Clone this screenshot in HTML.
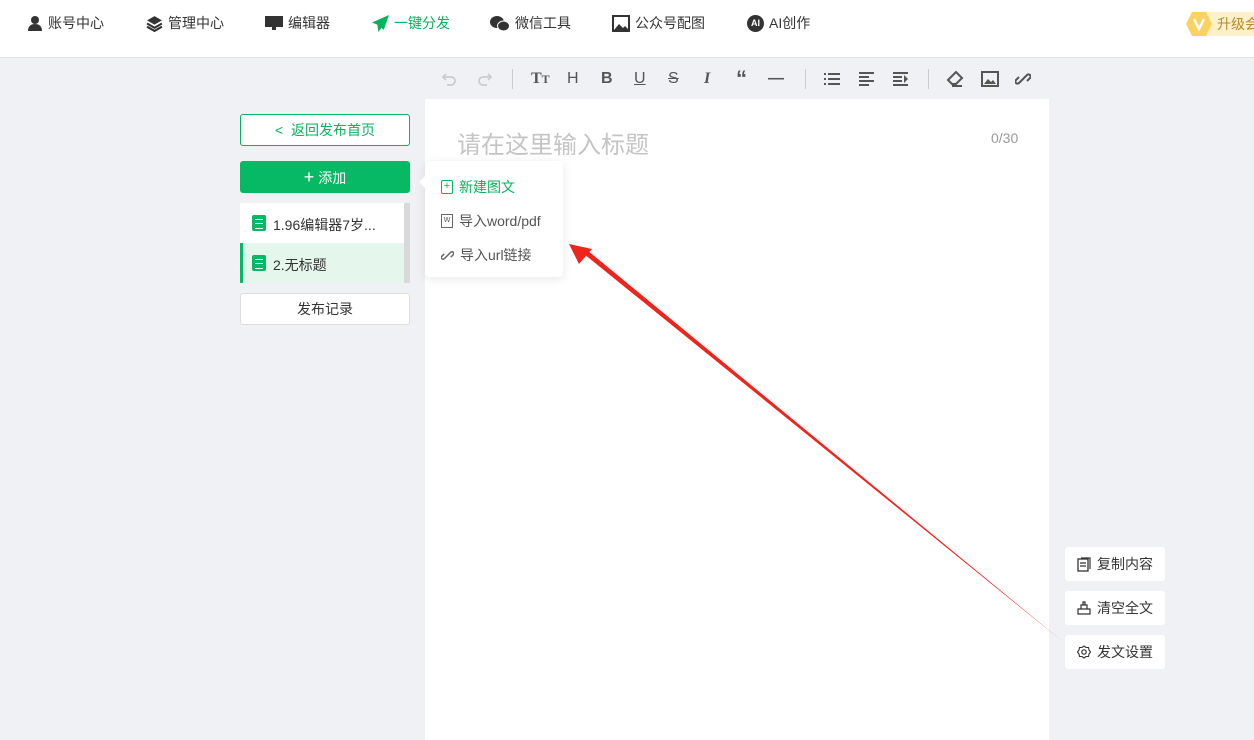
<!DOCTYPE html>
<html><head><meta charset="utf-8"><style>
*{margin:0;padding:0;box-sizing:border-box}
body{width:1254px;height:740px;overflow:hidden;background:#f0f1f5;font-family:"Liberation Sans","Noto Sans CJK SC",sans-serif;position:relative;color:#333}
.hdr{position:absolute;left:0;top:0;width:1254px;height:58px;background:#fff;border-bottom:1px solid #e2e3e6}
.nav{position:absolute;top:14px;font-size:14px;color:#333;display:flex;align-items:center;gap:5px;height:18px;white-space:nowrap}
.tb{position:absolute;top:70px;font-size:16px;color:#555;font-weight:bold}
.sep{position:absolute;top:69px;width:1px;height:20px;background:#ccc}
.btn{position:absolute;left:240px;width:170px;border-radius:3px;font-size:14px;text-align:center}
.ed{position:absolute;left:425px;top:99px;width:624px;height:641px;background:#fff}
.pop{position:absolute;left:425px;top:161px;width:138px;height:116px;background:#fff;border-radius:4px;box-shadow:0 2px 10px rgba(0,0,0,.1)}
.pi{position:absolute;left:16px;font-size:14px;color:#555;display:flex;align-items:center;gap:6px;white-space:nowrap}
.side{position:absolute;left:1065px;width:100px;height:34px;background:#fff;border-radius:3px;font-size:14px;color:#333;display:flex;align-items:center;padding-left:12px;gap:6px}
.doc{position:absolute;left:252px;width:14px;height:16px;background:#07b964;border-radius:2px}
.doc:before{content:"";position:absolute;left:3px;top:4px;width:8px;height:8px;border-top:1.5px solid #fff;border-bottom:1.5px solid #fff}
.doc:after{content:"";position:absolute;left:3px;top:7.5px;width:8px;height:1.5px;background:#fff}
</style></head><body>
<div class="hdr"></div>
<div class="nav" style="left:27px"><svg width="16" height="16" viewBox="0 0 16 16"><circle cx="8" cy="5" r="4" fill="#333"/><path d="M1 16c0-5 3-7 7-7s7 2 7 7z" fill="#333"/></svg>账号中心</div>
<div class="nav" style="left:146px"><svg width="17" height="17" viewBox="0 0 16 16"><path d="M8 1l7 4-7 4-7-4z" fill="#333"/><path d="M1 8l7 4 7-4M1 11l7 4 7-4" stroke="#333" stroke-width="2" fill="none"/></svg>管理中心</div>
<div class="nav" style="left:265px"><svg width="18" height="17" viewBox="0 0 18 17"><rect x="0" y="1" width="18" height="11" fill="#333"/><rect x="7" y="12" width="4" height="3" fill="#333"/></svg>编辑器</div>
<div class="nav" style="left:372px;color:#07b35b"><svg width="17" height="17" viewBox="0 0 16 16"><path d="M16 0L0 7l5 2 1 7 3-4 2 2z" fill="#07b35b"/></svg>一键分发</div>
<div class="nav" style="left:490px"><svg width="20" height="17" viewBox="0 0 20 17"><ellipse cx="7" cy="7" rx="7" ry="6" fill="#333"/><ellipse cx="13.5" cy="11" rx="6" ry="5" fill="#333" stroke="#fff" stroke-width="1"/></svg>微信工具</div>
<div class="nav" style="left:612px"><svg width="18" height="17" viewBox="0 0 18 17"><rect x="1" y="1" width="16" height="15" fill="none" stroke="#333" stroke-width="2"/><path d="M2 15l5-6 4 4 2-2 4 4z" fill="#333"/></svg>公众号配图</div>
<div class="nav" style="left:747px"><span style="width:17px;height:17px;border-radius:50%;background:#333;color:#fff;font-size:9px;font-weight:bold;display:flex;align-items:center;justify-content:center">AI</span>AI创作</div>
<div style="position:absolute;left:1197px;top:12px;width:70px;height:24px;background:#fdf1cc;border-radius:3px"></div>
<svg style="position:absolute;left:1186px;top:11px" width="26" height="26" viewBox="0 0 26 26"><path d="M6 1h14l6 12-6 12H6L0 13z" fill="#fbd261"/><path d="M8 8l5 10 5-10" stroke="#fff" stroke-width="2.5" fill="none"/></svg>
<div style="position:absolute;left:1217px;top:14px;font-size:14px;color:#b78a2c;white-space:nowrap">升级会员</div>

<svg style="position:absolute;left:442px;top:71px" width="16" height="16" viewBox="0 0 16 16"><path d="M4 3L1 6l3 3M1 6h8a4 4 0 010 8H5" stroke="#ccc" stroke-width="1.8" fill="none"/></svg>
<svg style="position:absolute;left:476px;top:71px" width="16" height="16" viewBox="0 0 16 16"><path d="M12 3l3 3-3 3M15 6H7a4 4 0 000 8h4" stroke="#ccc" stroke-width="1.8" fill="none"/></svg>
<div class="sep" style="left:512px"></div>
<div class="tb" style="left:531px;font-family:'Liberation Serif',serif">T<span style="font-size:12px">T</span></div>
<div class="tb" style="left:567px;font-weight:normal">H</div>
<div class="tb" style="left:601px">B</div>
<div class="tb" style="left:634px;text-decoration:underline;font-weight:normal">U</div>
<div class="tb" style="left:668px;text-decoration:line-through;font-weight:normal">S</div>
<div class="tb" style="left:704px;font-style:italic;font-family:'Liberation Serif',serif">I</div>
<div class="tb" style="left:736px;font-size:22px;top:66px">“</div>
<div class="tb" style="left:768px">—</div>
<div class="sep" style="left:805px"></div>
<svg style="position:absolute;left:824px;top:72px" width="16" height="14"><g fill="#555"><rect x="0" y="1" width="2" height="2"/><rect x="0" y="6" width="2" height="2"/><rect x="0" y="11" width="2" height="2"/><rect x="4" y="1" width="12" height="2"/><rect x="4" y="6" width="12" height="2"/><rect x="4" y="11" width="12" height="2"/></g></svg>
<svg style="position:absolute;left:859px;top:72px" width="16" height="14"><g fill="#555"><rect y="0" width="15" height="2"/><rect y="4" width="10" height="2"/><rect y="8" width="15" height="2"/><rect y="12" width="10" height="2"/></g></svg>
<svg style="position:absolute;left:893px;top:72px" width="16" height="14"><g fill="#555"><rect y="0" width="15" height="2"/><rect y="4" width="9" height="2"/><rect y="8" width="9" height="2"/><rect y="12" width="15" height="2"/><path d="M11 3l4 4-4 4z"/></g></svg>
<div class="sep" style="left:928px"></div>
<svg style="position:absolute;left:946px;top:70px" width="18" height="18" viewBox="0 0 18 18"><path d="M2 10l8-8 6 6-6 6H6z" fill="none" stroke="#555" stroke-width="2"/><path d="M6 16h10" stroke="#555" stroke-width="2"/></svg>
<svg style="position:absolute;left:981px;top:71px" width="18" height="16"><rect x="1" y="1" width="16" height="14" fill="none" stroke="#555" stroke-width="2"/><path d="M3 13l4-5 3 3 2-2 3 4z" fill="#555"/></svg>
<svg style="position:absolute;left:1015px;top:71px" width="16" height="16" viewBox="0 0 16 16"><path d="M7 9l-3 3a2 2 0 01-3-3l3-3M9 7l3-3a2 2 0 013 3l-3 3M6 10l4-4" stroke="#555" stroke-width="2" fill="none"/></svg>

<div class="btn" style="top:114px;height:32px;line-height:30px;border:1px solid #07b35b;color:#07b35b;background:#fff">&lt;&nbsp; 返回发布首页</div>
<div class="btn" style="top:161px;height:32px;line-height:32px;background:#07b964;color:#fff"><span style="font-size:18px">+</span> 添加</div>
<div style="position:absolute;left:240px;top:203px;width:164px;height:40px;background:#fff"></div>
<div style="position:absolute;left:240px;top:243px;width:164px;height:40px;background:#e5f6ed;border-left:3px solid #07b964"></div>
<div style="position:absolute;left:404px;top:203px;width:6px;height:80px;background:#d9d9d9"></div>
<div class="doc" style="top:215px"></div>
<div class="doc" style="top:255px"></div>
<div style="position:absolute;left:273px;top:215px;font-size:14px">1.96编辑器7岁...</div>
<div style="position:absolute;left:273px;top:255px;font-size:14px">2.无标题</div>
<div class="btn" style="top:293px;height:32px;line-height:30px;border:1px solid #ddd;background:#fff">发布记录</div>

<div class="ed"></div>
<div style="position:absolute;left:457px;top:125px;font-size:24px;color:#c4c4c4">请在这里输入标题</div>
<div style="position:absolute;left:991px;top:130px;font-size:14px;color:#999">0/30</div>

<div class="pop"></div>
<div style="position:absolute;left:413px;top:176px;width:0;height:0;border:6px solid transparent;border-right-color:#fff"></div>
<div class="pi" style="top:177px;left:441px;color:#07b35b"><span style="width:12px;height:14px;border:1.5px solid #07b35b;border-radius:2px;font-size:11px;line-height:10px;text-align:center">+</span>新建图文</div>
<div class="pi" style="top:211px;left:441px"><span style="width:12px;height:14px;border:1.5px solid #666;font-size:7px;line-height:12px;text-align:center">W</span>导入word/pdf</div>
<div class="pi" style="top:245px;left:441px"><svg width="13" height="13" viewBox="0 0 16 16"><path d="M7 9l-3 3a2 2 0 01-3-3l3-3M9 7l3-3a2 2 0 013 3l-3 3M6 10l4-4" stroke="#666" stroke-width="1.8" fill="none"/></svg>导入url链接</div>

<svg style="position:absolute;left:0;top:0" width="1254" height="740"><path d="M1062 641L584 254l3-4z" fill="#f0241d"/><polygon points="569,244 592,249 579,264" fill="#f0241d"/></svg>

<div class="side" style="top:547px"><svg width="14" height="15"><rect x="1" y="2" width="10" height="12" fill="none" stroke="#333" stroke-width="1.3"/><path d="M4 1h9v11M3 6h6M3 9h6" stroke="#333" stroke-width="1.2" fill="none"/></svg>复制内容</div>
<div class="side" style="top:591px"><svg width="14" height="14"><path d="M1 13h12V8H1zM4 8V4h6v4M6 4V1h2v3" stroke="#333" stroke-width="1.2" fill="none"/></svg>清空全文</div>
<div class="side" style="top:635px"><svg width="14" height="14" viewBox="0 0 14 14"><circle cx="7" cy="7" r="2.2" fill="none" stroke="#333" stroke-width="1.2"/><path d="M7 1l2 1.5 2.5 0 .5 2.5 1.5 2-1.5 2-.5 2.5-2.5 0L7 13l-2-1.5-2.5 0L2 9 .5 7 2 5l.5-2.5 2.5 0z" fill="none" stroke="#333" stroke-width="1.1"/></svg>发文设置</div>
</body></html>
